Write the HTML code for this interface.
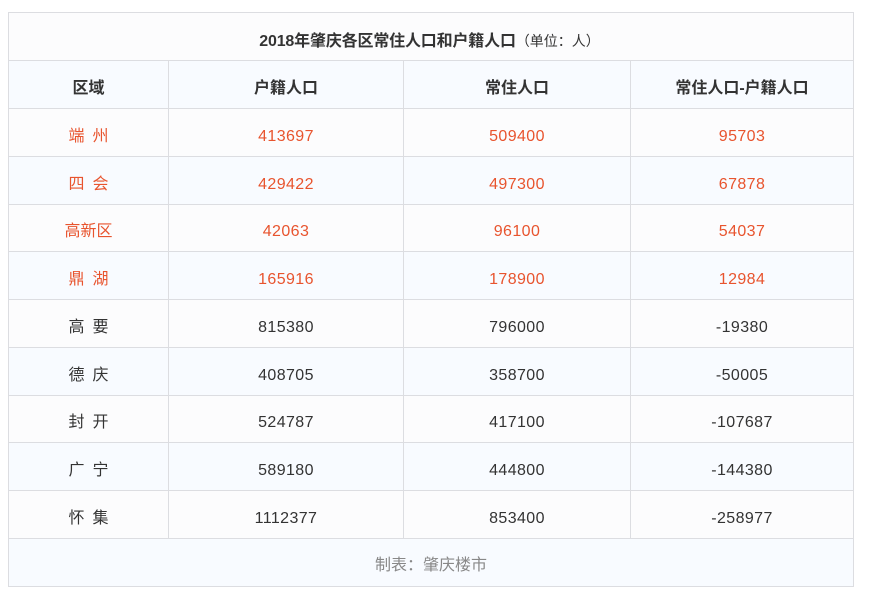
<!DOCTYPE html>
<html lang="zh">
<head>
<meta charset="utf-8">
<title>2018年肇庆各区常住人口和户籍人口</title>
<style>
html,body{margin:0;padding:0;background:#fff;width:870px;height:606px;overflow:hidden}
body{font-family:"Liberation Sans","Noto Sans CJK SC",sans-serif;font-size:16px;color:#333}
table{position:absolute;left:8px;top:12px;width:845px;border-collapse:collapse;table-layout:fixed}
td,th{border:1px solid #dcdde1;padding:8px 0 0;text-align:center;font-weight:normal;vertical-align:middle;letter-spacing:.4px}
th{padding-top:3px;font-weight:bold;letter-spacing:0}
th.t{padding:5px 3px 0 0;letter-spacing:-.17px}
tr:nth-child(odd) td,tr:nth-child(odd) th{background:#fcfcfd}
tr:nth-child(even) td,tr:nth-child(even) th{background:#f8fbff}
.o td{color:#e8542e}
td.n{word-spacing:3.5px;letter-spacing:0;padding-top:2px}
td.z{letter-spacing:0;padding-top:2px}
.u{font-weight:normal;font-size:14px;letter-spacing:0}
td.f{color:#888;letter-spacing:0;padding-top:0}
</style>
</head>
<body>
<table>
<colgroup><col style="width:160px"><col style="width:235px"><col style="width:227px"><col style="width:223px"></colgroup>
<tr style="height:48px"><th colspan="4" class="t">2018年肇庆各区常住人口和户籍人口<span class="u">（单位：人）</span></th></tr>
<tr style="height:48px"><th>区域</th><th>户籍人口</th><th>常住人口</th><th>常住人口-户籍人口</th></tr>
<tr class="o" style="height:48px"><td class="n">端&nbsp;州</td><td>413697</td><td>509400</td><td>95703</td></tr>
<tr class="o" style="height:48px"><td class="n">四&nbsp;会</td><td>429422</td><td>497300</td><td>67878</td></tr>
<tr class="o" style="height:47px"><td class="z">高新区</td><td>42063</td><td>96100</td><td>54037</td></tr>
<tr class="o" style="height:48px"><td class="n">鼎&nbsp;湖</td><td>165916</td><td>178900</td><td>12984</td></tr>
<tr style="height:48px"><td class="n">高&nbsp;要</td><td>815380</td><td>796000</td><td>-19380</td></tr>
<tr style="height:48px"><td class="n">德&nbsp;庆</td><td>408705</td><td>358700</td><td>-50005</td></tr>
<tr style="height:47px"><td class="n">封&nbsp;开</td><td>524787</td><td>417100</td><td>-107687</td></tr>
<tr style="height:48px"><td class="n">广&nbsp;宁</td><td>589180</td><td>444800</td><td>-144380</td></tr>
<tr style="height:48px"><td class="n">怀&nbsp;集</td><td>1112377</td><td>853400</td><td>-258977</td></tr>
<tr style="height:48px"><td colspan="4" class="f">制表：肇庆楼市</td></tr>
</table>
</body>
</html>
